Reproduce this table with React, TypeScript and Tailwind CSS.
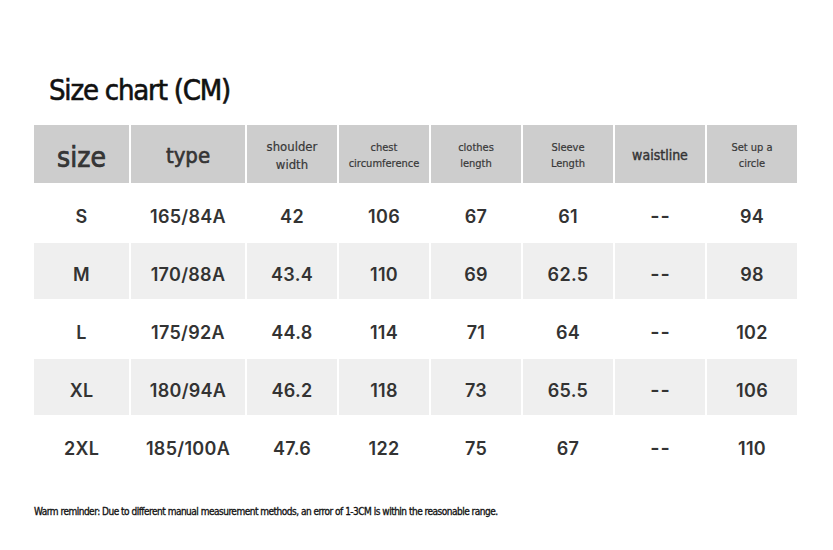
const headers: { label: React.ReactNode; cls: string }[] = [
  { label: "size", cls: "text-[28px] pt-2 text-[#2e2e2e] [-webkit-text-stroke:0.7px_#2e2e2e]" },
  { label: "type", cls: "text-[22px] pt-[2px] text-[#2e2e2e] [-webkit-text-stroke:0.6px_#2e2e2e]" },
  { label: <>shoulder<br />width</>, cls: "text-[13px] leading-[18px] pt-[3px] [-webkit-text-stroke:0.2px_#383838]" },
  { label: <>chest<br />circumference</>, cls: "text-[11px] leading-[16px] pt-[3px] [-webkit-text-stroke:0.2px_#383838]" },
  { label: <>clothes<br />length</>, cls: "text-[11px] leading-[16px] pt-[3px] [-webkit-text-stroke:0.2px_#383838]" },
  { label: <>Sleeve<br />Length</>, cls: "text-[11px] leading-[16px] pt-[3px] [-webkit-text-stroke:0.2px_#383838]" },
  { label: "waistline", cls: "text-[14px] pt-[3px] text-[#2e2e2e] [-webkit-text-stroke:0.4px_#2e2e2e]" },
  { label: <>Set up a<br />circle</>, cls: "text-[11px] leading-[16px] pt-[3px] [-webkit-text-stroke:0.2px_#383838]" },
];

const rows = [
  ["S", "165/84A", "42", "106", "67", "61", "--", "94"],
  ["M", "170/88A", "43.4", "110", "69", "62.5", "--", "98"],
  ["L", "175/92A", "44.8", "114", "71", "64", "--", "102"],
  ["XL", "180/94A", "46.2", "118", "73", "65.5", "--", "106"],
  ["2XL", "185/100A", "47.6", "122", "75", "67", "--", "110"],
];

export default function App() {
  return (
    <div className="h-[550px] w-[833px] bg-white pt-[72px]">
      <h1 className="ml-[49px] font-['DejaVu_Sans',sans-serif] text-[29px] leading-[36px] tracking-[-1.2px] text-[#111] [-webkit-text-stroke:0.6px_#111] font-stretch-condensed">
        Size chart (CM)
      </h1>

      <div className="ml-[34px] mt-[17px] grid grid-cols-[95px_114px_90px_90px_90px_90px_90px_90px] grid-rows-[58px_repeat(5,56px)] gap-[2px]">
        {headers.map((h, i) => (
          <div
            key={i}
            className={`flex items-center justify-center bg-[#cdcdcd] text-center font-['DejaVu_Sans',sans-serif] text-[#383838] font-stretch-condensed ${h.cls}`}
          >
            <span>{h.label}</span>
          </div>
        ))}
        {rows.map((r, ri) =>
          r.map((c, ci) => (
            <div
              key={`${ri}-${ci}`}
              className={`flex items-center justify-center pt-[6px] font-['Inter',sans-serif] text-[18px] font-semibold tracking-[0.3px] text-[#333] ${ri % 2 === 1 ? "bg-[#efefef]" : "bg-white"}`}
            >
              {c === "--" ? <span className="pl-[1px] text-[20px] tracking-[1px]">{c}</span> : c}
            </div>
          ))
        )}
      </div>

      <p className="ml-[34px] mt-[31px] font-['DejaVu_Sans',sans-serif] text-[10px] tracking-[-0.5px] text-[#111] [-webkit-text-stroke:0.3px_#111] font-stretch-condensed">
        Warm reminder: Due to different manual measurement methods, an error of 1-3CM is within the reasonable range.
      </p>
    </div>
  );
}
